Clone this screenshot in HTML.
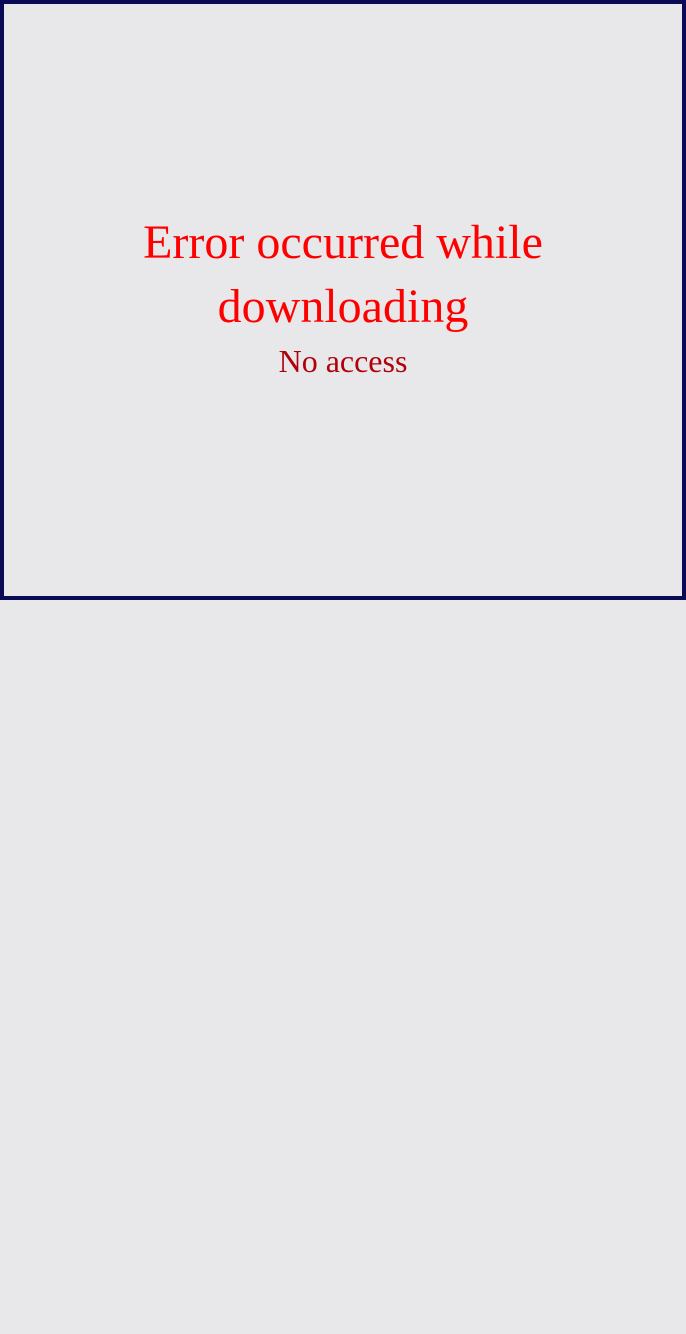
<!DOCTYPE html>
<html><head><meta charset="utf-8"><style>
html,body{margin:0;padding:0;width:686px;height:1334px;background:#e8e7e9;overflow:hidden}
.box{position:absolute;left:0;top:0;width:678px;height:592px;border:4px solid #0a0a55;background:#e8e7e9}
.t{position:absolute;left:0;width:686px;text-align:center;font-family:"Liberation Serif",serif;white-space:nowrap}
.a{font-size:48px;line-height:64px;color:#ff0000}
.b{font-size:32px;line-height:40px;color:#b0000a}
</style></head><body>
<div class="box"></div>
<div class="t a" style="top:211px">Error occurred while</div>
<div class="t a" style="top:275px">downloading</div>
<div class="t b" style="top:341px">No access</div>
</body></html>
